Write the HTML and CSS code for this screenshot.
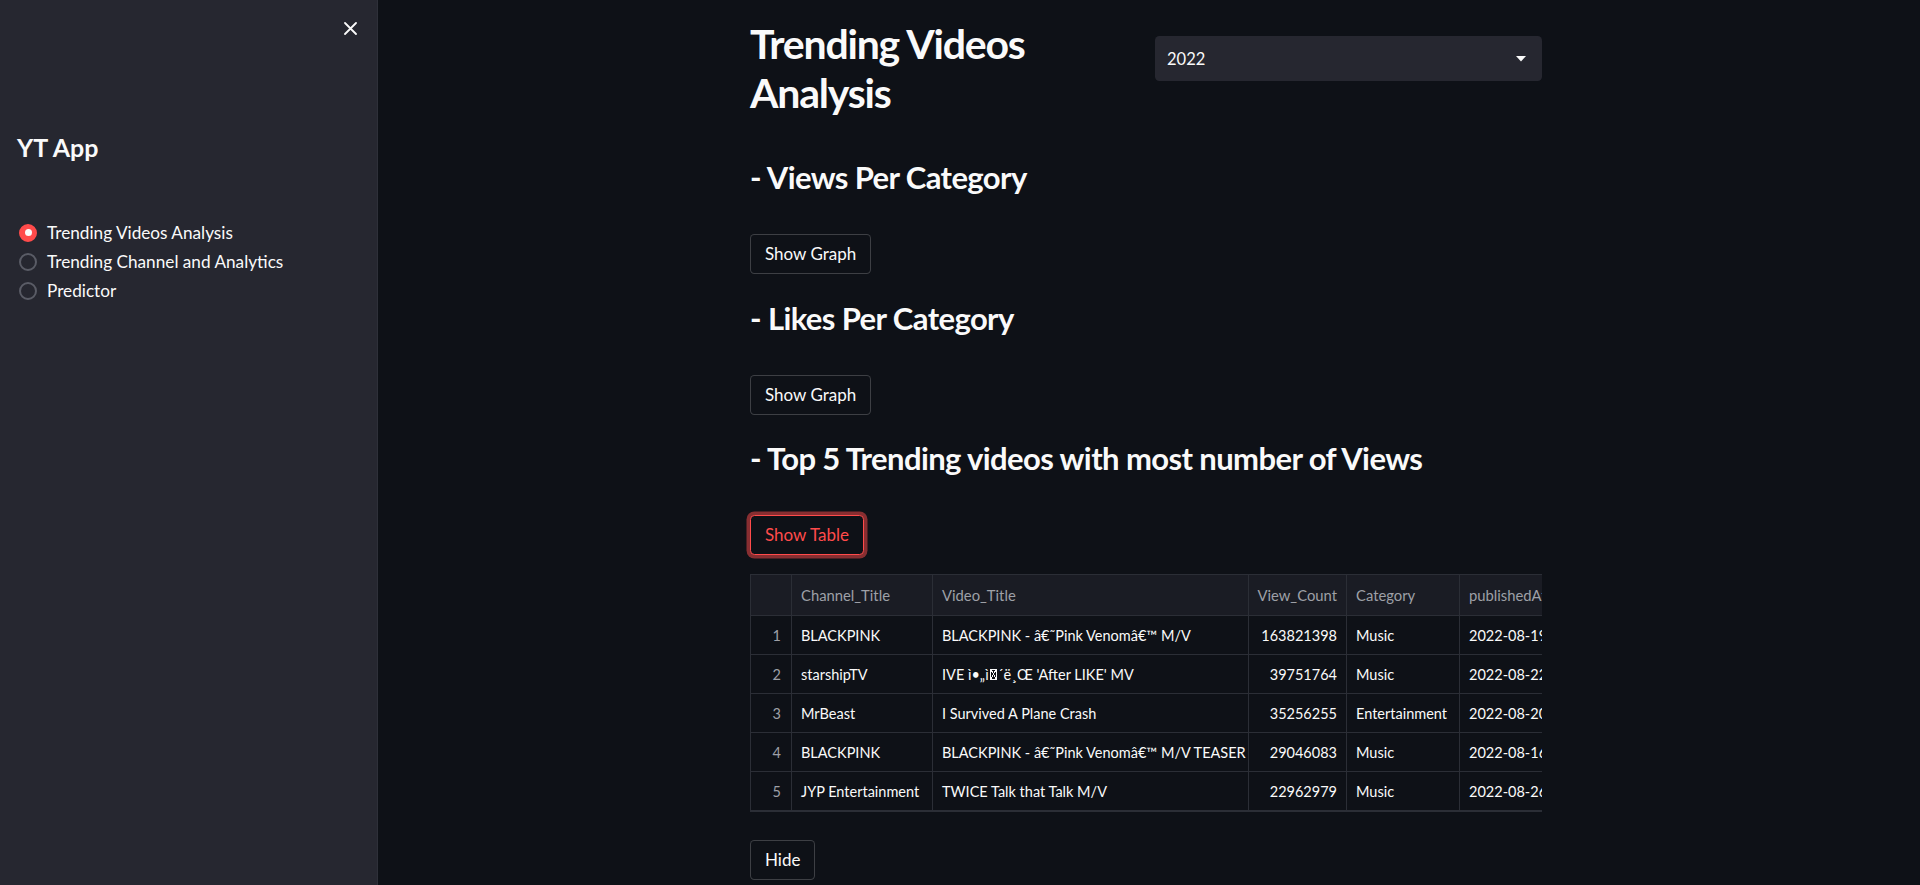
FILE: index.html
```html
<!DOCTYPE html>
<html lang="en">
<head>
<meta charset="utf-8">
<title>YT App</title>
<link rel="stylesheet" href="styles.css">
</head>
<body>
<div class="app">
  <aside class="sidebar">
    <div class="sb-top">
      <svg class="close" width="13" height="13" viewBox="0 0 13 13"><path d="M1 1 L12 12 M12 1 L1 12" stroke="#fafafa" stroke-width="1.8" stroke-linecap="round"/></svg>
    </div>
    <div class="sb-content">
      <div class="sb-title">YT App</div>
      <div class="radios">
        <div class="radio"><span class="dot on"></span><span class="rlabel">Trending Videos Analysis</span></div>
        <div class="radio"><span class="dot"></span><span class="rlabel">Trending Channel and Analytics</span></div>
        <div class="radio"><span class="dot"></span><span class="rlabel">Predictor</span></div>
      </div>
    </div>
  </aside>
  <main class="main">
    <div class="block">
      <div class="cols">
        <h1 class="title">Trending Videos Analysis</h1>
        <div class="select">
          <span>2022</span>
          <svg width="10" height="6" viewBox="0 0 10 6"><path d="M0 0 L10 0 L5 5.5 Z" fill="#fafafa"/></svg>
        </div>
      </div>
      <h2 class="sub">- Views Per Category</h2>
      <div><button class="btn">Show Graph</button></div>
      <h2 class="sub">- Likes Per Category</h2>
      <div><button class="btn">Show Graph</button></div>
      <h2 class="sub">- Top 5 Trending videos with most number of Views</h2>
      <div><button class="btn focus">Show Table</button></div>
      <div class="table-wrap">
        <div class="grid">
          <div class="c h idx"></div><div class="c h">Channel_Title</div><div class="c h">Video_Title</div><div class="c h num">View_Count</div><div class="c h">Category</div><div class="c h">publishedAt</div>

          <div class="c idx">1</div><div class="c">BLACKPINK</div><div class="c">BLACKPINK - â€˜Pink Venomâ€™ M/V</div><div class="c num">163821398</div><div class="c">Music</div><div class="c">2022-08-19</div>

          <div class="c idx">2</div><div class="c">starshipTV</div><div class="c">IVE ì•„ì<span class="tofu">&#x9D;</span>´ë¸Œ 'After LIKE' MV</div><div class="c num">39751764</div><div class="c">Music</div><div class="c">2022-08-22</div>

          <div class="c idx">3</div><div class="c">MrBeast</div><div class="c">I Survived A Plane Crash</div><div class="c num">35256255</div><div class="c">Entertainment</div><div class="c">2022-08-20</div>

          <div class="c idx">4</div><div class="c">BLACKPINK</div><div class="c">BLACKPINK - â€˜Pink Venomâ€™ M/V TEASER</div><div class="c num">29046083</div><div class="c">Music</div><div class="c">2022-08-16</div>

          <div class="c idx">5</div><div class="c">JYP Entertainment</div><div class="c">TWICE Talk that Talk M/V</div><div class="c num">22962979</div><div class="c">Music</div><div class="c">2022-08-26</div>
        </div>
      </div>
      <div><button class="btn">Hide</button></div>
    </div>
  </main>
</div>
</body>
</html>
```

FILE: styles.css
```css
html, body {
  margin: 0;
  padding: 0;
  height: 885px;
  overflow: hidden;
  background: #0e1117;
  color: #fafafa;
  font-family: Lato, "Noto Sans", sans-serif;
}
* { box-sizing: border-box; }

.app {
  display: flex;
  height: 885px;
}

/* Sidebar */
.sidebar {
  width: 378px;
  flex: 0 0 378px;
  background: #262730;
  border-right: 1px solid #2e3039;
}
.sb-top {
  height: 56px;
  display: flex;
  justify-content: flex-end;
  align-items: flex-start;
  padding: 22px 20px 0 0;
}
.close { display: block; }
.sb-content { padding: 0 17px; }
.sb-title {
  margin-top: 74px;
  font-size: 25px;
  font-weight: 700;
  line-height: 34px;
}
.radios {
  margin-top: 54px;
  display: flex;
  flex-direction: column;
}
.radio {
  height: 29px;
  display: flex;
  align-items: center;
}
.dot {
  width: 18px;
  height: 18px;
  margin-left: 2px;
  border-radius: 50%;
  border: 2px solid #5a5c66;
  display: flex;
  align-items: center;
  justify-content: center;
}
.dot.on {
  background: #ff4b4b;
  border-color: #ff4b4b;
}
.dot.on::after {
  content: "";
  width: 7px;
  height: 7px;
  border-radius: 50%;
  background: #fafafa;
}
.rlabel {
  margin-left: 10px;
  font-size: 17.2px;
  color: #fafafa;
}

/* Main */
.main {
  flex: 1;
  padding-right: 6px;
}
.block {
  width: 792px;
  margin: 0 auto;
  display: flex;
  flex-direction: column;
  gap: 17.6px;
}
.cols {
  display: grid;
  grid-template-columns: 387px 387px;
  column-gap: 18px;
  height: 133.4px;
}
.title {
  margin: 0;
  padding-top: 19px;
  font-size: 41px;
  font-weight: 700;
  letter-spacing: -1.2px;
  line-height: 49px;
}
.select {
  margin-top: 36px;
  height: 45px;
  background: #262730;
  border-radius: 4.4px;
  display: flex;
  align-items: center;
  justify-content: space-between;
  padding: 0 16px 0 12px;
  font-size: 16.5px;
}
.sub {
  margin: 0;
  height: 65.4px;
  padding-top: 5px;
  font-size: 31px;
  font-weight: 700;
  letter-spacing: -0.6px;
  line-height: 42px;
}
.btn {
  height: 40px;
  padding: 0 14px;
  background: #0e1117;
  color: #fafafa;
  border: 1px solid rgba(250, 250, 250, 0.2);
  border-radius: 4.4px;
  font-family: Lato, "Noto Sans", sans-serif;
  font-size: 17px;
  line-height: 28px;
}
.btn.focus {
  color: #ff4b4b;
  border-color: #ff4b4b;
  box-shadow: 0 0 0 3.5px rgba(255, 75, 75, 0.5);
}

/* Table */
.table-wrap {
  margin-top: 1.4px;
  margin-bottom: 10px;
  width: 792px;
  height: 238px;
  overflow: hidden;
  border: 1px solid #2b2e36;
  border-right: none;
}
.grid {
  display: grid;
  grid-template-columns: 41px 141px 316px 98px 113px 170px;
  grid-template-rows: 41px repeat(5, 39px);
  font-size: 14.5px;
}
.c {
  border-right: 1px solid #2b2e36;
  border-bottom: 1px solid #2b2e36;
  padding: 0 9px;
  display: flex;
  align-items: center;
  white-space: nowrap;
  color: #fafafa;
}
.c.h {
  background: #1a1c24;
  color: #9ea0a7;
  font-size: 14.8px;
}
.c.idx {
  justify-content: flex-end;
  color: #9ea0a7;
  padding-right: 10px;
}
.c.num { justify-content: flex-end; }
.tofu {
  display: inline-block;
  width: 7px;
  height: 11px;
  margin: 0 1px;
  border: 1px solid #fafafa;
  background:
    linear-gradient(to top right, transparent 46%, #fafafa 46%, #fafafa 58%, transparent 58%),
    linear-gradient(to top left, transparent 46%, #fafafa 46%, #fafafa 58%, transparent 58%);
  color: transparent;
  overflow: hidden;
  line-height: 9px;
  font-size: 1px;
}
```
